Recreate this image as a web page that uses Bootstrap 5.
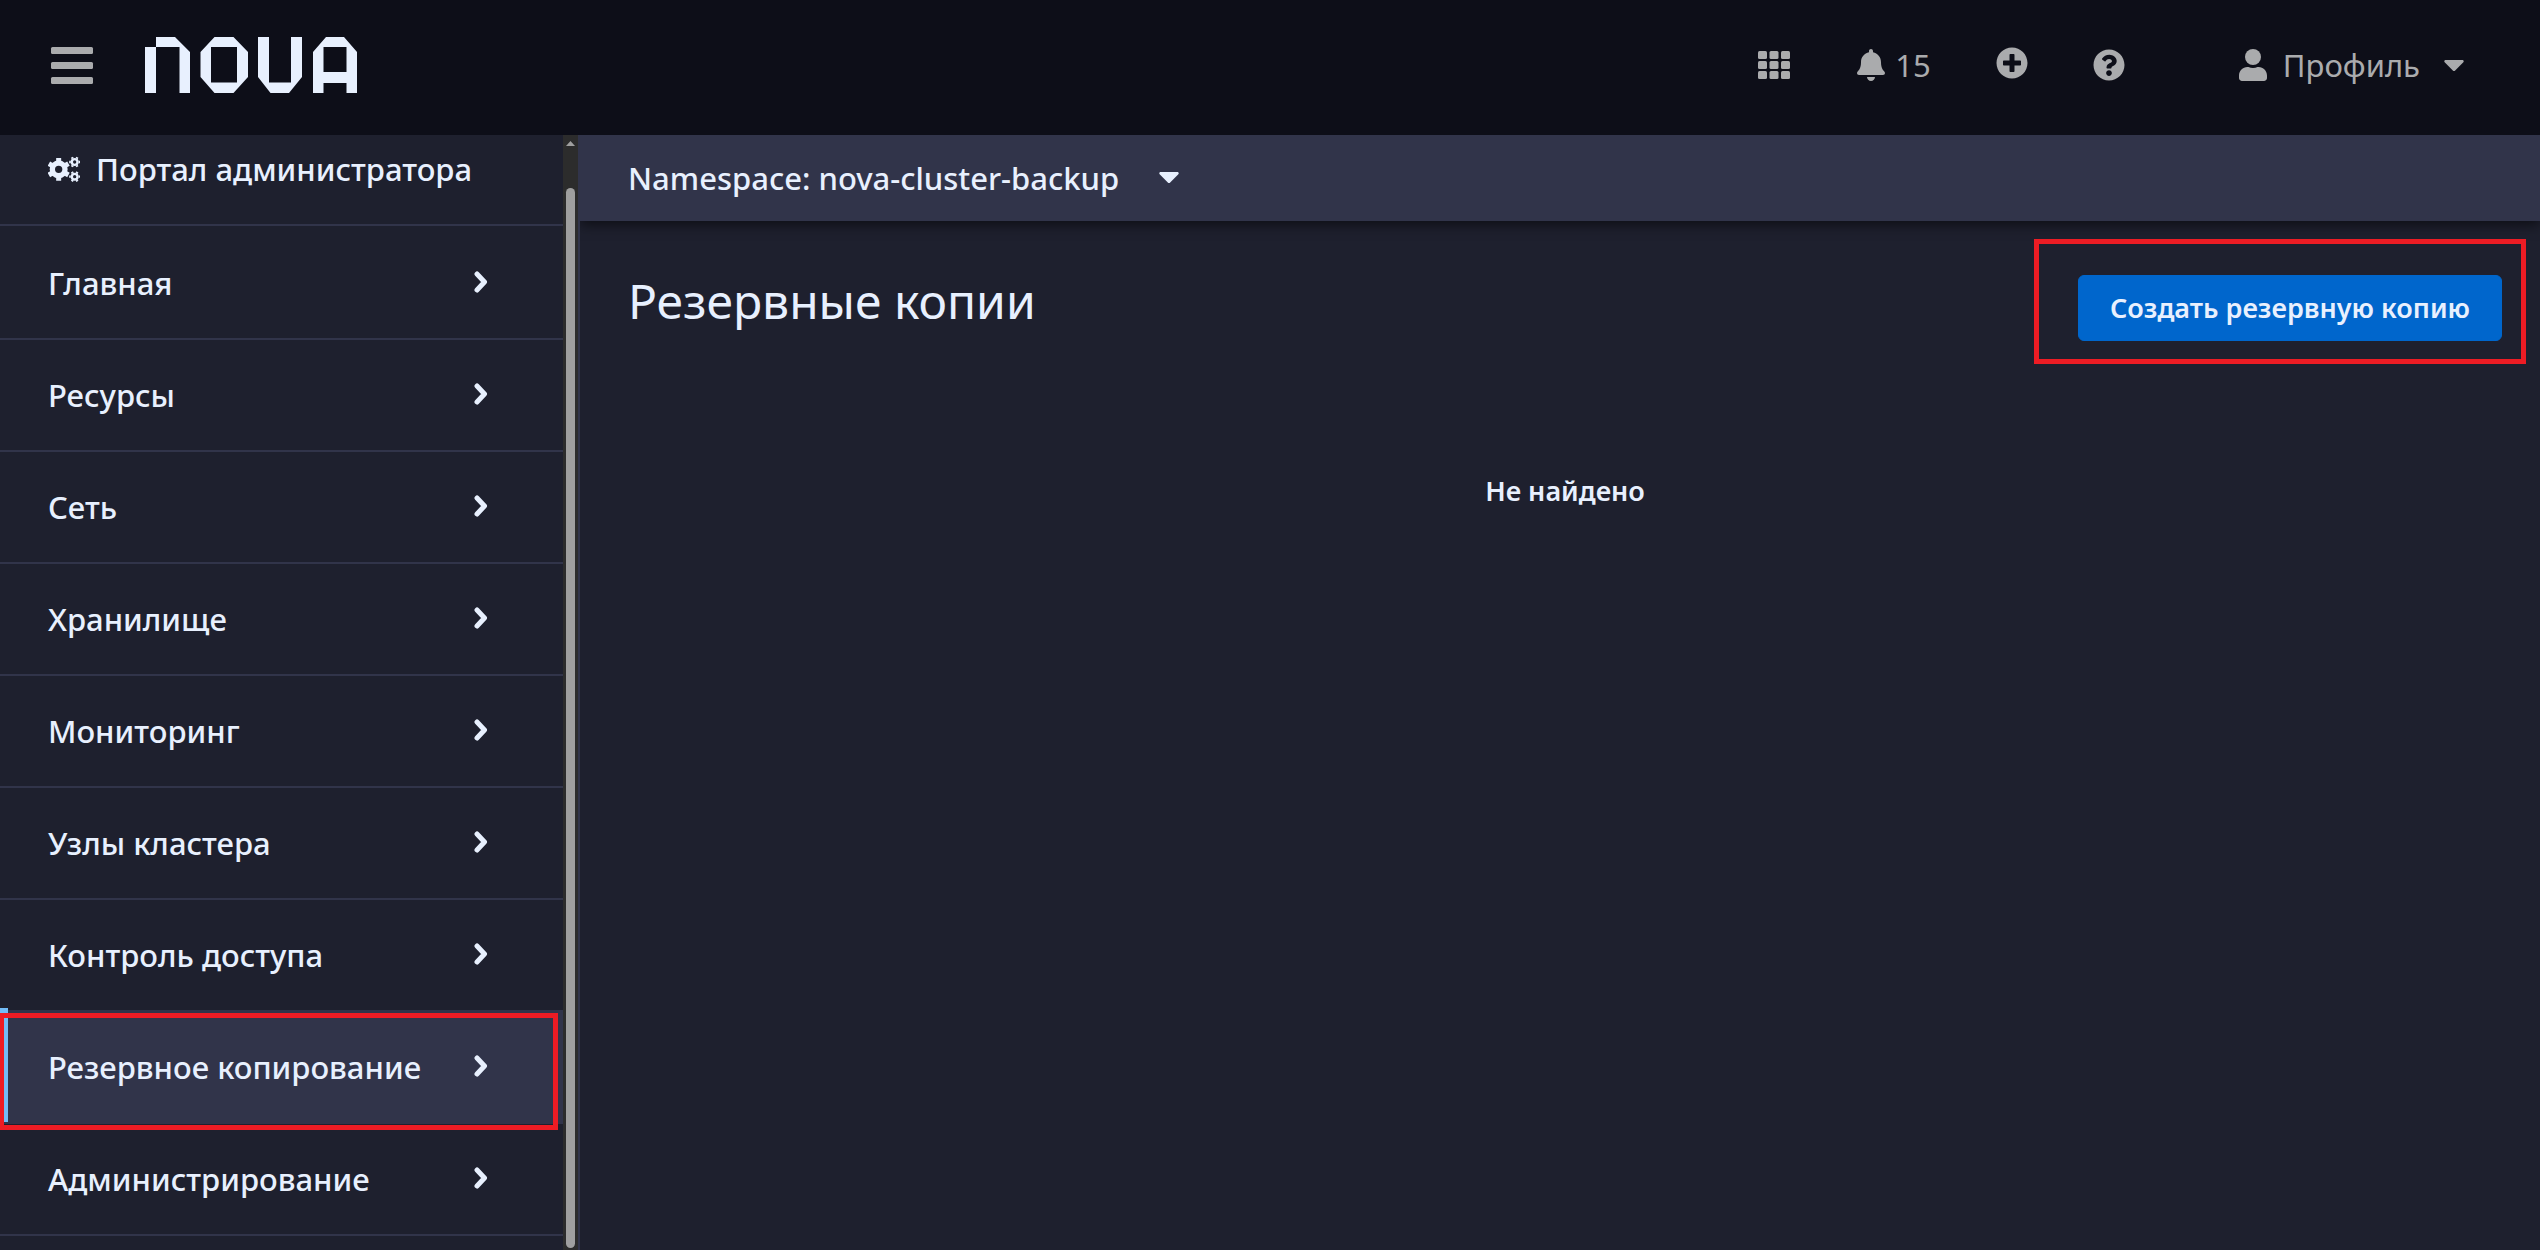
<!DOCTYPE html>
<html lang="ru">
<head>
<meta charset="utf-8">
<meta name="viewport" content="width=device-width, initial-scale=1">
<title>NOVA – Резервные копии</title>
<link href="https://cdn.jsdelivr.net/npm/bootstrap@5.3.0/dist/css/bootstrap.min.css" rel="stylesheet">
<style>
  :root {
    --ink: #e8f0fe;
    --muted: #aaabad;
    --page: #1e202e;
    --raised: #31344a;
    --top: #0d0e18;
    --accent: #73bcf7;
    --frame: #ed1c24;
  }
  body {
    font-family: "Noto Sans", "Open Sans", sans-serif;
    font-size: 31px;
    line-height: 42px;
    color: var(--ink);
    background: var(--page);
  }
  svg { display: block; fill: currentColor; }
  a, button { color: inherit; font: inherit; text-decoration: none; }
  .plain-btn { background: none; border: 0; padding: 0; }

  .masthead { background: var(--top); color: var(--muted); height: 135px; padding: 0 76px 5px 48px; }
  .brand-link { color: var(--ink); margin-left: 49px; }
  .tools { gap: 65px; }
  .profile-btn { margin-left: 49px; }

  .side { width: 580px; border-right: 2px solid var(--raised); font-weight: 500; }
  .portal-btn { height: 91px; padding: 0 48px 21px; border-bottom: 2px solid var(--raised); gap: 16px; }
  .side-list { padding-top: 2px; }
  .side-link { height: 112px; padding: 0 74px 1px 48px; border-bottom: 2px solid var(--raised); }
  .side-link svg { margin-bottom: 2px; }
  .side-link.active { background: var(--raised); }
  .side-link.active::before {
    content: ""; position: absolute; left: 0; top: -4px; bottom: 2px; width: 8px; background: var(--accent);
  }
  .scroll-track { width: 15px; background: #2c2c2c; padding: 6px 3px 2px; }
  .scroll-thumb { background: #9f9f9f; border-radius: 5px; margin-top: 42px; }

  .callout-frame { position: absolute; border: 5px solid var(--frame); pointer-events: none; }
  .frame-menu { inset: 1px 5px -6px -1px; }
  .frame-create { inset: -36px -24px -23px -44px; }

  .namespace-bar { background: var(--raised); height: 86px; padding: 0 48px 1px; box-shadow: 0 4px 12px rgba(0, 0, 0, .55); clip-path: inset(0 0 -20px 0); font-weight: 500; }
  .ns-btn { gap: 40px; }
  .content-area { padding: 54px 38px 0 48px; }
  .page-title { font-size: 48px; line-height: 52px; font-weight: 400; margin: 0; }
  .create-btn {
    --bs-btn-bg: #0066cc; --bs-btn-border-color: #0066cc; --bs-btn-color: var(--ink);
    --bs-btn-hover-bg: #004080; --bs-btn-padding-x: 31px; --bs-btn-padding-y: 12px;
    --bs-btn-border-radius: 6px; --bs-btn-font-size: 27px; --bs-btn-line-height: 40px;
    font-size: 27px; line-height: 40px; font-weight: 600;
  }
  .empty-note { font-size: 27px; line-height: 40px; font-weight: 600; margin: 130px 0 0; }
</style>
</head>
<body class="vh-100 d-flex flex-column overflow-hidden">

<svg width="0" height="0" class="position-absolute" aria-hidden="true">
  <symbol id="i-caret" viewBox="17 192 286 168"><path d="M31.3 192h257.3c17.8 0 26.7 21.5 14.1 34.1L174.1 354.8c-7.8 7.8-20.5 7.8-28.3 0L17.2 226.1C4.6 213.5 13.5 192 31.3 192z"/></symbol>
  <symbol id="i-chevron" viewBox="0 0 14 22"><path d="M3 3l7.500 8L3 19" fill="none" stroke="currentColor" stroke-width="5" stroke-linecap="round" stroke-linejoin="round"/></symbol>
  <symbol id="i-gears" viewBox="0 0 96 78">
    <g fill="none" stroke="currentColor">
      <circle cx="32" cy="40" r="19" stroke-width="16"/>
      <circle cx="80" cy="18" r="8.500" stroke-width="7"/>
      <circle cx="80" cy="62" r="8.500" stroke-width="7"/>
      <path stroke-width="15" d="M32 6v12M32 62v12M2.600 23l10.400 6M51 51l10.400 6M2.600 57L13 51M51 29l10.400-6"/>
      <g stroke-width="7">
        <path d="M63.500 18h5M91.500 18h5M71.700 3.700l2.500 4.300M85.800 28l2.500 4.300M88.300 3.700L85.800 8M74.200 28l-2.500 4.300"/>
        <path d="M63.500 62h5M91.500 62h5M71.700 47.700l2.500 4.300M85.800 72l2.500 4.300M88.300 47.700L85.800 52M74.200 72l-2.500 4.300"/>
      </g>
    </g>
  </symbol>
</svg>

<header class="masthead navbar flex-nowrap justify-content-between flex-shrink-0">
  <div class="d-flex align-items-center">
    <button class="plain-btn" type="button" aria-label="Меню">
      <svg width="48" height="40" viewBox="0 0 48 40"><rect x="3" y="2" width="42" height="7" rx="1.500"/><rect x="3" y="17" width="42" height="7" rx="1.500"/><rect x="3" y="32" width="42" height="7" rx="1.500"/></svg>
    </button>
    <a class="brand-link" href="#" aria-label="NOVA">
      <svg width="212" height="56" viewBox="0 0 212 56" fill-rule="evenodd">
        <path d="M0 10h11v46H0zM11 0h19l15 15v41H34.500V10H11z"/>
        <path d="M69.500 0h19L103 15v25L88.500 56h-19L55.500 40V15zM66 10v35.500h26V10z"/>
        <path d="M113 0h11v45.500h22V0h11v40l-13 16h-18.500L113 40z"/>
        <path d="M181 0h18l13 15v41h-10.500V46H178.500v10H168V15zM178.500 10v25H201.500V10z"/>
      </svg>
    </a>
  </div>
  <div class="tools d-flex align-items-center">
    <button class="plain-btn" type="button" aria-label="Приложения">
      <svg width="32" height="28" viewBox="0 0 32 28"><g id="gr"><rect width="9" height="8" rx="1.500"/><rect x="11.500" width="9" height="8" rx="1.500"/><rect x="23" width="9" height="8" rx="1.500"/></g><use href="#gr" y="10"/><use href="#gr" y="20"/></svg>
    </button>
    <button class="plain-btn d-flex align-items-center" type="button" aria-label="Уведомления: 15">
      <svg class="me-2" width="32" height="32" viewBox="-32 0 512 512"><path d="M224 512c35.320 0 63.970-28.650 63.970-64H160.030c0 35.350 28.650 64 63.970 64zm215.390-149.710c-19.320-20.760-55.470-51.990-55.470-154.290 0-77.700-54.480-139.900-127.940-155.160V32c0-17.670-14.320-32-31.980-32s-31.980 14.330-31.980 32v20.840C118.560 68.100 64.080 130.300 64.080 208c0 102.300-36.150 133.530-55.470 154.290-6 6.450-8.660 14.160-8.610 21.710.11 16.400 12.980 32 32.100 32h383.800c19.120 0 32-15.600 32.100-32 .05-7.550-2.610-15.270-8.610-21.710z"/></svg>
      <span>15</span>
    </button>
    <button class="plain-btn pb-1" type="button" aria-label="Создать">
      <svg width="32" height="32" viewBox="0 0 512 512"><path d="M256 8C119 8 8 119 8 256s111 248 248 248 248-111 248-248S393 8 256 8zm144 276c0 6.600-5.400 12-12 12h-92v92c0 6.600-5.400 12-12 12h-56c-6.600 0-12-5.400-12-12v-92h-92c-6.600 0-12-5.400-12-12v-56c0-6.600 5.400-12 12-12h92v-92c0-6.600 5.400-12 12-12h56c6.600 0 12 5.400 12 12v92h92c6.600 0 12 5.400 12 12v56z"/></svg>
    </button>
    <button class="plain-btn" type="button" aria-label="Справка">
      <svg width="32" height="32" viewBox="0 0 512 512"><path d="M504 256c0 136.997-111.043 248-248 248S8 392.997 8 256C8 119.083 119.043 8 256 8s248 111.083 248 248zM262.655 90c-54.497 0-89.255 22.957-116.549 63.758-3.536 5.286-2.353 12.415 2.715 16.258l34.699 26.310c5.205 3.947 12.621 3.008 16.665-2.122 17.864-22.658 30.113-35.797 57.303-35.797 20.429 0 45.698 13.148 45.698 32.958 0 14.976-12.363 22.667-32.534 33.976C247.128 238.528 216 254.941 216 296v4c0 6.627 5.373 12 12 12h56c6.627 0 12-5.373 12-12v-1.333c0-28.462 83.186-29.647 83.186-106.667 0-58.002-60.165-102-116.531-102zM256 338c-25.365 0-46 20.635-46 46 0 25.364 20.635 46 46 46s46-20.636 46-46c0-25.365-20.635-46-46-46z"/></svg>
    </button>
    <button class="plain-btn profile-btn d-flex align-items-center" type="button">
      <svg width="28" height="32" viewBox="0 0 448 512"><circle cx="224" cy="128" r="128"/><path d="M313.600 288h-16.700c-22.200 10.200-46.900 16-72.900 16s-50.600-5.800-72.900-16h-16.700C60.200 288 0 348.200 0 422.400V464c0 26.500 21.500 48 48 48h352c26.500 0 48-21.500 48-48v-41.600c0-74.200-60.200-134.400-134.400-134.400z"/></svg>
      <span class="ms-3 me-4">Профиль</span>
      <svg width="20" height="11"><use href="#i-caret"/></svg>
    </button>
  </div>
</header>

<div class="d-flex flex-grow-1 overflow-hidden">
  <aside class="side d-flex flex-shrink-0">
    <nav class="flex-grow-1">
      <button class="portal-btn plain-btn w-100 d-flex align-items-center border-start-0 border-end-0 border-top-0" type="button">
        <svg width="32" height="26"><use href="#i-gears"/></svg>
        <span>Портал администратора</span>
      </button>
      <ul class="side-list list-unstyled mb-0">
        <li><a class="side-link d-flex align-items-center justify-content-between" href="#">Главная<svg width="16" height="22"><use href="#i-chevron"/></svg></a></li>
        <li><a class="side-link d-flex align-items-center justify-content-between" href="#">Ресурсы<svg width="16" height="22"><use href="#i-chevron"/></svg></a></li>
        <li><a class="side-link d-flex align-items-center justify-content-between" href="#">Сеть<svg width="16" height="22"><use href="#i-chevron"/></svg></a></li>
        <li><a class="side-link d-flex align-items-center justify-content-between" href="#">Хранилище<svg width="16" height="22"><use href="#i-chevron"/></svg></a></li>
        <li><a class="side-link d-flex align-items-center justify-content-between" href="#">Мониторинг<svg width="16" height="22"><use href="#i-chevron"/></svg></a></li>
        <li><a class="side-link d-flex align-items-center justify-content-between" href="#">Узлы кластера<svg width="16" height="22"><use href="#i-chevron"/></svg></a></li>
        <li><a class="side-link d-flex align-items-center justify-content-between" href="#">Контроль доступа<svg width="16" height="22"><use href="#i-chevron"/></svg></a></li>
        <li class="position-relative"><a class="side-link active d-flex align-items-center justify-content-between" href="#" aria-current="page">Резервное копирование<svg width="16" height="22"><use href="#i-chevron"/></svg></a><span class="callout-frame frame-menu"></span></li>
        <li><a class="side-link d-flex align-items-center justify-content-between" href="#">Администрирование<svg width="16" height="22"><use href="#i-chevron"/></svg></a></li>
      </ul>
    </nav>
    <div class="scroll-track d-flex flex-column" aria-hidden="true">
      <svg width="9" height="5" viewBox="0 0 9 5" class="flex-shrink-0"><path d="M4.500 0L9 5H0z" fill="#9f9f9f"/></svg>
      <div class="scroll-thumb flex-grow-1"></div>
    </div>
  </aside>

  <main class="flex-grow-1">
    <div class="namespace-bar d-flex align-items-center">
      <button class="plain-btn ns-btn d-flex align-items-center" type="button">
        <span>Namespace: nova-cluster-backup</span>
        <svg width="20" height="11" class="flex-shrink-0"><use href="#i-caret"/></svg>
      </button>
    </div>
    <div class="content-area">
      <div class="d-flex justify-content-between align-items-start">
        <h1 class="page-title">Резервные копии</h1>
        <div class="position-relative">
          <button class="btn btn-primary create-btn" type="button">Создать резервную копию</button>
          <span class="callout-frame frame-create"></span>
        </div>
      </div>
      <p class="empty-note text-center">Не найдено</p>
    </div>
  </main>
</div>

<script src="https://cdn.jsdelivr.net/npm/bootstrap@5.3.0/dist/js/bootstrap.bundle.min.js"></script>
</body>
</html>
